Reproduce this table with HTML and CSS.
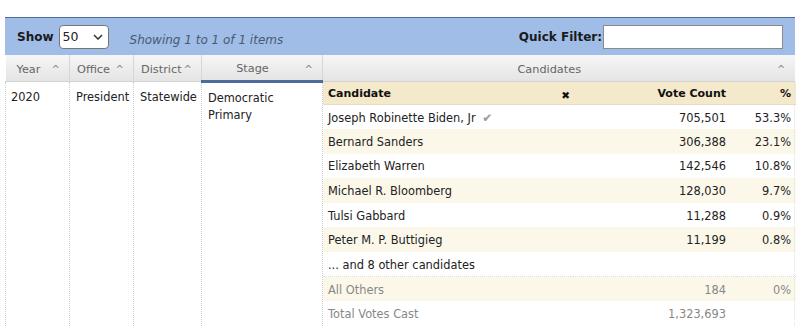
FILE: index.html
```html
<!DOCTYPE html>
<html>
<head>
<meta charset="utf-8">
<link rel="stylesheet" href="styles.css">
</head>
<body>
<div class="wrap">
  <div class="toolbar">
    <div class="tb-left">
      <span class="lbl">Show</span>
      <span class="select"><span>50</span><svg width="10" height="6" viewBox="0 0 10 6"><path d="M1 1l4 4 4-4" fill="none" stroke="#333" stroke-width="1.5"/></svg></span>
      <span class="info">Showing 1 to 1 of 1 items</span>
    </div>
    <div class="tb-right">
      <span class="lbl">Quick Filter:</span>
      <span class="input"></span>
    </div>
  </div>
  <table class="grid">
    <colgroup>
      <col class="c-year"><col class="c-office"><col class="c-district"><col class="c-stage"><col>
    </colgroup>
    <thead>
      <tr>
        <th class="sortable first"><span>Year</span><i class="caret">^</i></th>
        <th class="sortable"><span>Office</span><i class="caret">^</i></th>
        <th class="sortable"><span>District</span><i class="caret">^</i></th>
        <th class="sortable center sorted"><span>Stage</span><i class="caret">^</i></th>
        <th class="sortable center"><span>Candidates</span><i class="caret">^</i></th>
      </tr>
    </thead>
    <tbody>
      <tr>
        <td>2020</td>
        <td>President</td>
        <td>Statewide</td>
        <td>Democratic Primary</td>
        <td class="cands">
          <table class="inner">
            <thead>
              <tr><th class="name-h">Candidate <span class="x">✖</span></th><th class="num">Vote Count</th><th class="pct">%</th></tr>
            </thead>
            <tbody>
              <tr><td>Joseph Robinette Biden, Jr <span class="check">✔</span></td><td class="num">705,501</td><td class="pct">53.3%</td></tr>
              <tr class="alt"><td>Bernard Sanders</td><td class="num">306,388</td><td class="pct">23.1%</td></tr>
              <tr><td>Elizabeth Warren</td><td class="num">142,546</td><td class="pct">10.8%</td></tr>
              <tr class="alt"><td>Michael R. Bloomberg</td><td class="num">128,030</td><td class="pct">9.7%</td></tr>
              <tr><td>Tulsi Gabbard</td><td class="num">11,288</td><td class="pct">0.9%</td></tr>
              <tr class="alt"><td>Peter M. P. Buttigieg</td><td class="num">11,199</td><td class="pct">0.8%</td></tr>
              <tr class="more"><td colspan="3">... and 8 other candidates</td></tr>
              <tr class="alt muted"><td>All Others</td><td class="num">184</td><td class="pct">0%</td></tr>
              <tr class="muted"><td>Total Votes Cast</td><td class="num">1,323,693</td><td class="pct"></td></tr>
            </tbody>
          </table>
        </td>
      </tr>
    </tbody>
  </table>
</div>
</body>
</html>
```

FILE: styles.css
```css
html, body {
  margin: 0;
  padding: 0;
  background: #fff;
}
body {
  font-family: "DejaVu Sans", Verdana, sans-serif;
  font-size: 11.4px;
  color: #222;
}
.wrap {
  margin: 17px 15px 0 5px;
}
.toolbar {
  display: flex;
  justify-content: space-between;
  align-items: center;
  height: 37px;
  background: #a0bde8;
  border-top: 1px solid #4f6d96;
  padding: 0 12px 0 12px;
}
.tb-left, .tb-right {
  display: flex;
  align-items: center;
}
.lbl {
  font-weight: bold;
  font-size: 12px;
  color: #1a1a1a;
}
.select {
  display: flex;
  align-items: center;
  justify-content: space-between;
  width: 50px;
  height: 24px;
  box-sizing: border-box;
  margin-left: 5px;
  padding: 0 5px 0 3px;
  background: #fff;
  border: 1px solid #767676;
  border-radius: 4px;
  font-size: 12.5px;
}
.info {
  margin-left: 21px;
  font-style: italic;
  color: #4a5a70;
  font-size: 12px;
  margin-top: 6px;
}
.input {
  display: block;
  width: 180px;
  height: 24px;
  box-sizing: border-box;
  margin-left: 1px;
  background: #fff;
  border: 1px solid #8a8a8a;
}
.grid {
  width: 100%;
  border-collapse: collapse;
  table-layout: fixed;
}
.c-year { width: 64px; }
.c-office { width: 64px; }
.c-district { width: 68px; }
.c-stage { width: 121px; }
.grid > thead th {
  height: 26px;
  padding: 3px 6px 0 7px;
  background: linear-gradient(#f6f6f6, #e4e4e4);
  border-right: 1px solid #d6d6d6;
  border-bottom: 1px solid #d2d2d2;
  font-weight: normal;
  color: #666;
  font-size: 11.3px;
  text-align: left;
  position: relative;
  box-sizing: border-box;
}
.grid > thead th.first { padding-left: 11px; }
.grid > thead th:last-child { border-right: none; }
.grid > thead th.center { text-align: center; padding-right: 26px; }
.grid > thead th .caret {
  font-style: normal;
  font-size: 10px;
  color: #888;
  position: absolute;
  right: 9px;
  top: 9px;
}
.grid > thead th.sorted {
  border-bottom: 3px solid #4d6c9c;
}
.grid > tbody > tr > td {
  vertical-align: top;
  padding: 7px 5px 0 6px;
  border-right: 1px dotted #ccc;
  line-height: 17px;
  height: 240px;
}
.grid > tbody > tr > td:first-child { border-left: 1px dotted #ccc; padding-left: 5px; }
.grid > tbody > tr > td.cands {
  padding: 0;
  border-right: 1px dotted #e2e2e2;
}
.inner {
  width: 100%;
  border-collapse: collapse;
  table-layout: fixed;
}
.inner th {
  box-sizing: border-box;
  background: #f5e9cc;
  height: 23px;
  font-size: 11px;
  font-weight: bold;
  color: #111;
  text-align: left;
  padding: 2px 5px 0 5px;
  border-bottom: 1px solid #e5dcc4;
}
.inner th.name-h {
  position: relative;
  width: 250px;
}
.inner .x {
  position: absolute;
  right: 3px;
  top: 5px;
  font-size: 10.5px;
}
.inner td {
  box-sizing: border-box;
  height: 24.6px;
  padding: 2px 5px 0 5px;
  font-size: 11.4px;
  color: #222;
}
.inner .num { text-align: right; padding-right: 10px; }
.inner th.num { width: 163px; }
.inner .pct { text-align: right; padding-right: 5px; }
.inner th.pct { width: 60px; }
.inner tr.alt td { background: #fbf8ea; }
.inner tr.more td { border-bottom: 1px dotted #ddd; }
.inner tr.muted td { color: #888; }
.check {
  color: #999;
  font-size: 12px;
  margin-left: 3px;
}
```
